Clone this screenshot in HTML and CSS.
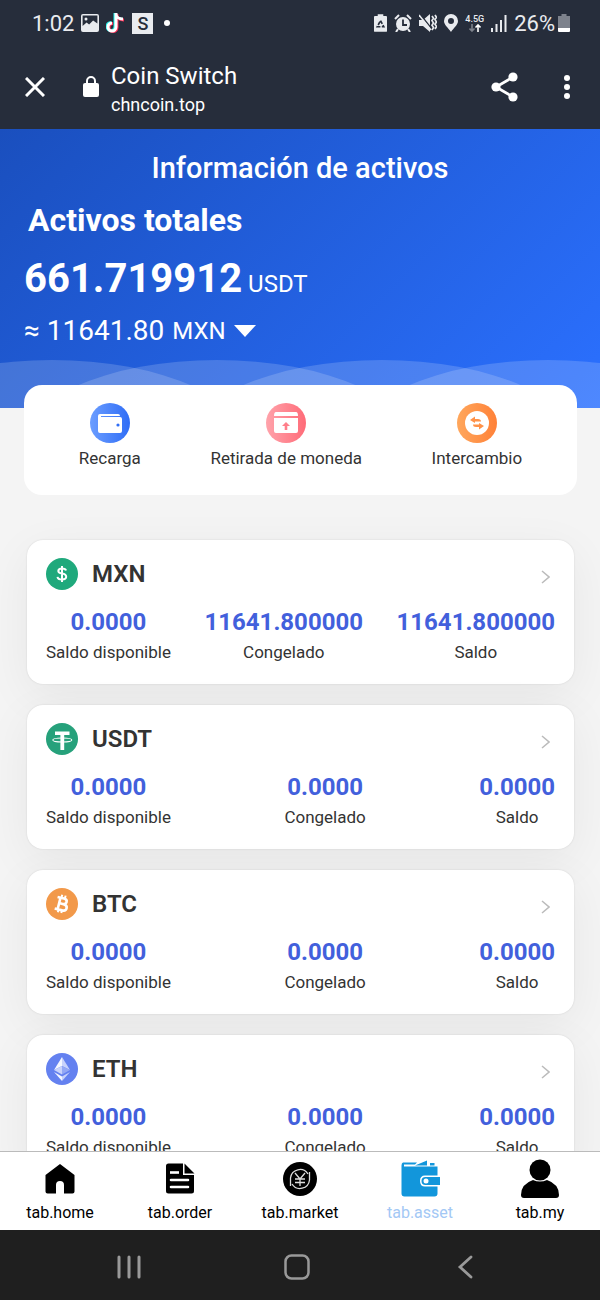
FILE: index.html
```html
<!DOCTYPE html>
<html lang="es">
	<head>
		<meta charset="utf-8">
		<title>Coin Switch</title>
		<meta name="theme-color" content="#262d3b">
		<meta name="viewport" content="width=device-width, initial-scale=1">
		<link rel="stylesheet" href="styles.css">
	</head>
	<body>
		<header class="browser">
			<div class="status">
				<span class="clock">1:02</span>
				<svg width="18" height="18" viewBox="0 0 18 18"><path fill="#e9ebef" fill-rule="evenodd" d="M2 0h14a2 2 0 0 1 2 2v14a2 2 0 0 1-2 2H2a2 2 0 0 1-2-2V2a2 2 0 0 1 2-2zM1.600 1.600V12l4-3.500 2.500 2 4-4 4.300 3V1.600z"/><circle cx="5" cy="5" r="1.500" fill="#e9ebef"/></svg>
				<svg class="tiktok" width="19" height="20" viewBox="0 0 19 20" fill="none" stroke-width="3"><path stroke="#25f4ee" d="M9 0v13.500a4 4 0 1 1-4-4M9 1c0 3 3 5 6 5"/><path stroke="#fe2c55" d="M11 1v13.500a4 4 0 1 1-4-4M11 2c0 3 3 5 7 5"/><path stroke="#fff" d="M10 0v14a4 4 0 1 1-4-4M10 1c0 3 3 5 7 5"/></svg>
				<span class="badge">S</span>
				<span class="dot"></span>
				<div class="system">
					<svg width="13" height="18" viewBox="0 0 14 19"><path fill="#e9ebef" d="M4 0h6v2h3q1 0 1 1v15q0 1-1 1H1q-1 0-1-1V3q0-1 1-1h3z"/><path fill="none" stroke="#262d3b" stroke-width="1.800" stroke-dasharray="4 1.500" d="M7 7l3.500 6.500h-7z"/></svg>
					<svg width="18" height="18" viewBox="0 0 18 18"><circle cx="9" cy="10" r="7" fill="#e9ebef"/><path fill="none" stroke="#e9ebef" stroke-width="2" d="M1 5l4-4M17 5l-4-4M4 15l-2 3M14 15l2 3"/><path fill="none" stroke="#262d3b" stroke-width="1.800" d="M9 5.500V11h4"/></svg>
					<svg width="18" height="18" viewBox="0 0 18 18"><path fill="#e9ebef" d="M0 6h4l7-6v18l-7-6H0z"/><path stroke="#262d3b" stroke-width="1.500" d="M1 0l11 14"/><path stroke="#e9ebef" stroke-width="1.500" d="M0 1l12 15"/><path fill="none" stroke="#e9ebef" stroke-width="1.700" d="M13 2l1.500 2.300L13 6.600 14.500 9 13 11.300l1.500 2.300L13 16M16 1l1.500 2.300L16 5.600 17.500 8 16 10.300l1.500 2.300L16 15"/></svg>
					<svg width="14" height="18" viewBox="0 0 14 18"><path fill="#e9ebef" fill-rule="evenodd" d="M7 0a7 7 0 0 1 7 7c0 4-4.500 7-7 11-2.500-4-7-7-7-11a7 7 0 0 1 7-7zm0 4a3 3 0 1 0 0 6 3 3 0 0 0 0-6z"/></svg>
					<span class="network">
						4.5G
						<svg width="12" height="8" viewBox="0 0 12 8" fill="none" stroke-width="1.600"><path stroke="#7d828c" d="M3 0v7M.500 4.500L3 7l2.500-2.500"/><path stroke="#fff" d="M9 8V1M6.500 3.500L9 1l2.500 2.500"/></svg>
					</span>
					<svg width="16" height="17" viewBox="0 0 16 17" fill="#e9ebef"><path d="M0 13h2v4H0zM4.500 9h2v8h-2zM9 5h2v12H9zM13.500 0h2v17h-2z"/></svg>
					<span class="clock">26%</span>
					<svg class="battery" width="12" height="18" viewBox="0 0 12 18"><path fill="#7d828c" d="M3.500 0h5v2H12v12H0V2h3.500z"/><path fill="#fff" d="M0 14h12v3q0 1-1 1H1q-1 0-1-1z"/></svg>
				</div>
			</div>
			<div class="toolbar">
				<button class="tool" aria-label="Cerrar"><svg width="20" height="20" viewBox="0 0 20 20"><path fill="none" stroke="#fff" stroke-width="3" d="M1 1l18 18M19 1L1 19"/></svg></button>
				<svg class="lock" width="16" height="22" viewBox="0 0 16 22"><rect y="7" width="16" height="14" rx="2" fill="#fff"/><path fill="none" stroke="#fff" stroke-width="2" d="M4 9V5a4 4 0 0 1 8 0v4"/></svg>
				<div class="site">
					<div class="site-name">Coin Switch</div>
					<div class="site-url">chncoin.top</div>
				</div>
				<button class="tool share" aria-label="Compartir"><svg width="28" height="30" viewBox="0 0 28 30" fill="#fff"><path fill="none" stroke="#fff" stroke-width="2.800" d="M22 5L5 15l17 10"/><circle cx="22" cy="5" r="4.600"/><circle cx="5" cy="15" r="4.600"/><circle cx="22" cy="25" r="4.600"/></svg></button>
				<button class="tool" aria-label="Menú"><svg width="6" height="24" viewBox="0 0 6 24" fill="#fff"><circle cx="3" cy="3" r="3"/><circle cx="3" cy="12" r="3"/><circle cx="3" cy="21" r="3"/></svg></button>
			</div>
		</header>

		<main class="page">
			<section class="hero">
				<svg class="waves" viewBox="0 0 600 48" preserveAspectRatio="none" fill="#fff" fill-opacity=".17"><ellipse cx="52" cy="90" rx="200" ry="90"/><ellipse cx="217" cy="90" rx="200" ry="90"/><ellipse cx="382" cy="90" rx="200" ry="90"/><ellipse cx="548" cy="90" rx="200" ry="90"/></svg>
				<h1 class="title">Información de activos</h1>
				<h2 class="subtitle">Activos totales</h2>
				<div class="total"><strong>661.719912</strong> USDT</div>
				<div class="fiat">
					<span>≈ 11641.80</span>
					<select class="currency" aria-label="Moneda"><option>MXN</option></select>
					<svg class="caret" width="22" height="12" viewBox="0 0 22 12"><path fill="#fff" d="M0 0h22L11 12z"/></svg>
				</div>
			</section>

			<section class="actions">
				<button class="action">
					<svg width="40" height="40" viewBox="0 0 40 40"><defs><linearGradient id="blue"><stop stop-color="#6b9dff"/><stop offset="1" stop-color="#2f6df6"/></linearGradient></defs><circle cx="20" cy="20" r="20" fill="url(#blue)"/><path fill="#fff" d="M10 11h18q2 0 2 2H11v1h19q2 0 2 2v12q0 2-2 2H10q-2 0-2-2V13q0-2 2-2z"/><circle cx="28" cy="22" r="1.600" fill="#2f6df6"/></svg>
					Recarga
				</button>
				<button class="action">
					<svg width="40" height="40" viewBox="0 0 40 40"><defs><linearGradient id="pink"><stop stop-color="#ffa3ab"/><stop offset="1" stop-color="#ff6b78"/></linearGradient></defs><circle cx="20" cy="20" r="20" fill="url(#pink)"/><path fill="#fff" d="M10 9h20q2 0 2 4H8q0-4 2-4zM8 15h24v13q0 2-2 2H10q-2 0-2-2z"/><path fill="#ff7f8a" d="M20 19l4 4h-2.700v4h-2.600v-4H16z"/></svg>
					Retirada de moneda
				</button>
				<button class="action">
					<svg width="40" height="40" viewBox="0 0 40 40"><defs><linearGradient id="orange"><stop stop-color="#ffa75c"/><stop offset="1" stop-color="#ff8138"/></linearGradient></defs><circle cx="20" cy="20" r="20" fill="url(#orange)"/><circle cx="20" cy="20" r="12" fill="#fff"/><path fill="#ff9249" d="M13 17l5-3.500V16h3q3 0 3 2.500h-6V20zM27 23l-5 3.500V24h-3q-3 0-3-2.500h6V20z"/></svg>
					Intercambio
				</button>
			</section>

			<section class="coins">
				<article class="coin">
					<div class="coin-head">
						<svg width="32" height="32" viewBox="0 0 32 32"><circle cx="16" cy="16" r="16" fill="#1fa97c"/><path fill="none" stroke="#fff" stroke-width="2" d="M20 12.500q-.500-2-4-2-3.700 0-3.700 2.500 0 2 3.700 2.600 4.200.600 4.200 3.200 0 2.700-4.200 2.700t-4.500-2.700M16 8v16"/></svg>
						<h3>MXN</h3>
						<a href="#mxn" class="more" aria-label="Ver MXN"><svg width="9" height="14" viewBox="0 0 9 14"><path fill="none" stroke="#bbb" stroke-width="1.500" d="M1 1l7 6-7 6"/></svg></a>
					</div>
					<dl class="balances">
						<div><dd>0.0000</dd><dt>Saldo disponible</dt></div>
						<div><dd>11641.800000</dd><dt>Congelado</dt></div>
						<div><dd>11641.800000</dd><dt>Saldo</dt></div>
					</dl>
				</article>
				<article class="coin">
					<div class="coin-head">
						<svg width="32" height="32" viewBox="0 0 32 32"><circle cx="16" cy="16" r="16" fill="#26a17b"/><path fill="#fff" d="M9 8.500h14.500v3.500h-5.300V27h-3.800V12H9z"/><ellipse cx="16.300" cy="17" rx="9.500" ry="2" fill="none" stroke="#fff" stroke-width="1.100"/></svg>
						<h3>USDT</h3>
						<a href="#usdt" class="more" aria-label="Ver USDT"><svg width="9" height="14" viewBox="0 0 9 14"><path fill="none" stroke="#bbb" stroke-width="1.500" d="M1 1l7 6-7 6"/></svg></a>
					</div>
					<dl class="balances">
						<div><dd>0.0000</dd><dt>Saldo disponible</dt></div>
						<div><dd>0.0000</dd><dt>Congelado</dt></div>
						<div><dd>0.0000</dd><dt>Saldo</dt></div>
					</dl>
				</article>
				<article class="coin">
					<div class="coin-head">
						<svg width="32" height="32" viewBox="0 0 32 32"><circle cx="16" cy="16" r="16" fill="#f2994a"/><g transform="rotate(14 16 16)" fill="none" stroke="#fff"><path stroke-width="2.600" d="M10 10.200h6.500q3.500 0 3.500 2.800t-3.500 2.800H13h4.500q4 0 4 3.200t-4 3.200H10M13 10v12"/><path stroke-width="2" d="M14 7v3M17.500 7v3M14 22v3M17.500 22v3"/></g></svg>
						<h3>BTC</h3>
						<a href="#btc" class="more" aria-label="Ver BTC"><svg width="9" height="14" viewBox="0 0 9 14"><path fill="none" stroke="#bbb" stroke-width="1.500" d="M1 1l7 6-7 6"/></svg></a>
					</div>
					<dl class="balances">
						<div><dd>0.0000</dd><dt>Saldo disponible</dt></div>
						<div><dd>0.0000</dd><dt>Congelado</dt></div>
						<div><dd>0.0000</dd><dt>Saldo</dt></div>
					</dl>
				</article>
				<article class="coin">
					<div class="coin-head">
						<svg width="32" height="32" viewBox="0 0 32 32"><circle cx="16" cy="16" r="16" fill="#6481f0"/><path fill="#f4f6ff" d="M16 4v9l-8 4z"/><path fill="#c8d2fb" d="M16 4l8 13-8-4z"/><path fill="#c8d2fb" d="M16 13v8.500L8 17z"/><path fill="#94a8f5" d="M16 13l8 4-8 4.500z"/><path fill="#f4f6ff" d="M8 19l8 4.500V28z"/><path fill="#c8d2fb" d="M24 19l-8 4.500V28z"/></svg>
						<h3>ETH</h3>
						<a href="#eth" class="more" aria-label="Ver ETH"><svg width="9" height="14" viewBox="0 0 9 14"><path fill="none" stroke="#bbb" stroke-width="1.500" d="M1 1l7 6-7 6"/></svg></a>
					</div>
					<dl class="balances">
						<div><dd>0.0000</dd><dt>Saldo disponible</dt></div>
						<div><dd>0.0000</dd><dt>Congelado</dt></div>
						<div><dd>0.0000</dd><dt>Saldo</dt></div>
					</dl>
				</article>
			</section>
		</main>

		<nav class="tabs">
			<a href="#home" class="tab">
				<svg width="40" height="40" viewBox="0 0 40 40"><path d="M20 5l14.500 11v16.500q0 2-2 2H24V26q0-4-4-4t-4 4v8.500H7.500q-2 0-2-2V16z"/></svg>
				tab.home
			</a>
			<a href="#order" class="tab">
				<svg width="40" height="40" viewBox="0 0 40 40"><path d="M8.500 4.500H23V16h11v16q0 2.500-2.500 2.500h-23Q6 34.500 6 32V7q0-2.500 2.500-2.500zM24.500 4.500l10 10h-10z"/><path fill="none" stroke="#fff" stroke-width="2.600" stroke-linecap="round" d="M11 21h17M11 28h17"/><path stroke="#fff" stroke-width="2.600" d="M10 13.500h9"/></svg>
				tab.order
			</a>
			<a href="#market" class="tab">
				<svg width="40" height="40" viewBox="0 0 40 40"><circle cx="20" cy="20" r="17"/><g fill="none" stroke="#ddd" stroke-width="1.300"><path d="M28 15a9.500 9.500 0 0 0-17.500 4v8M12 25a9.500 9.500 0 0 0 17.500-4v-8M15 14l5 6 5-6M15 20h10M15 23.500h10M20 20v7"/></g></svg>
				tab.market
			</a>
			<a href="#asset" class="tab active">
				<svg width="40" height="40" viewBox="0 0 40 40"><path fill="#1296db" d="M3 3.500h14l-2 2H4v2h33.500v9H25q-5 0-5 5.500t5 5.500h12.500v7q0 3-3 3H4.500q-3 0-3-3v-28q0-2.500 1.500-3zM15 6.500L27 1.500v5zM30 4h4.500v2.500H30zM25.500 18H40v8H25.500q-4 0-4-4t4-4z"/><circle cx="26" cy="22" r="2.500" fill="#fff"/></svg>
				tab.asset
			</a>
			<a href="#my" class="tab">
				<svg width="40" height="40" viewBox="0 0 40 40"><circle cx="20" cy="11" r="10.500"/><path d="M13 21q7 3 14 0 12 4 12 15 0 3-3 3H4q-3 0-3-3 0-11 12-15z"/></svg>
				tab.my
			</a>
		</nav>

		<footer class="keys">
			<button class="key" aria-label="Recientes"><svg width="24" height="24" viewBox="0 0 24 24"><path stroke="#999" stroke-width="3" stroke-linecap="round" d="M2 2v20M12 2v20M22 2v20"/></svg></button>
			<button class="key" aria-label="Inicio"><svg width="26" height="26" viewBox="0 0 26 26"><rect x="1.500" y="1.500" width="23" height="23" rx="6" fill="none" stroke="#999" stroke-width="2.500"/></svg></button>
			<button class="key" aria-label="Atrás"><svg width="16" height="24" viewBox="0 0 16 24"><path fill="none" stroke="#999" stroke-width="2.800" stroke-linecap="round" d="M14 2L3 12l11 10"/></svg></button>
		</footer>
	</body>
</html>
```
FILE: styles.css
```css
* {
	box-sizing: border-box;
}
html, body {
	margin: 0;
	padding: 0;
	height: 100%;
}
body {
	display: flex;
	flex-direction: column;
	background: #f4f4f4;
	color: #333;
	font-family: Roboto, sans-serif;
	font-size: 17px;
}
h1, h2, h3, dl, dd {
	margin: 0;
}
button, select {
	border: none;
	padding: 0;
	background: none;
	color: inherit;
	font: inherit;
}
button {
	cursor: pointer;
}
svg {
	display: block;
	flex: none;
}

/* phone status bar and browser toolbar */
.browser {
	flex: none;
	background: #262d3b;
	color: #fff;
}
.status {
	display: flex;
	align-items: center;
	gap: 7px;
	height: 46px;
	padding: 0 30px 0 32px;
	color: #e9ebef;
}
.clock {
	font-size: 22px;
}
.badge {
	width: 21px;
	background: #e9ebef;
	color: #262d3b;
	font-size: 18px;
	font-weight: 500;
	line-height: 21px;
	text-align: center;
}
.dot {
	width: 6px;
	height: 6px;
	margin-left: 4px;
	border-radius: 50%;
	background: #fff;
}
.system {
	display: flex;
	align-items: center;
	gap: 7px;
	margin-left: auto;
}
.network {
	display: flex;
	flex-direction: column;
	align-items: center;
	font-size: 9px;
	font-weight: 500;
	line-height: 10px;
}
.battery {
	margin-left: -4px;
}
.toolbar {
	display: flex;
	align-items: center;
	height: 83px;
	padding: 0 30px 2px 25px;
}
.lock {
	margin-left: 38px;
}
.site {
	margin-left: 12px;
	padding-top: 6px;
}
.site-name {
	font-size: 24px;
	line-height: 30px;
}
.site-url {
	font-size: 18px;
	line-height: 28px;
}
.share {
	margin-left: auto;
	margin-right: 45px;
}

.page {
	flex: 1;
	min-height: 0;
	overflow: hidden;
}
.hero {
	position: relative;
	padding: 17px 24px 52px;
	background: linear-gradient(135deg, #1a4fbe, #2b70ff);
	color: #fff;
}
.waves {
	position: absolute;
	left: 0;
	bottom: 0;
	width: 100%;
	height: 48px;
}
.title {
	font-size: 29px;
	font-weight: 500;
	line-height: 44px;
	text-align: center;
}
.subtitle {
	padding-left: 4px;
	font-size: 32px;
	font-weight: 700;
	line-height: 60px;
}
.total {
	padding-top: 12px;
	font-size: 24px;
	line-height: 44px;
}
.total strong {
	font-size: 40px;
	line-height: 32px;
}
.fiat {
	display: flex;
	align-items: center;
	gap: 8px;
	font-size: 28px;
	line-height: 50px;
}
.currency {
	appearance: none;
	font-size: 24px;
}

.actions {
	position: relative;
	display: flex;
	justify-content: space-around;
	align-items: flex-start;
	margin: -23px 23px 0 24px;
	padding: 18px 20px 22px;
	border-radius: 18px;
	background: #fff;
}
.action {
	display: flex;
	flex-direction: column;
	align-items: center;
	line-height: 30px;
}

.coins {
	display: grid;
	gap: 21px;
	padding: 45px 26px 21px 27px;
}
.coin {
	padding: 18px 19px 17px;
	border-radius: 16px;
	background: #fff;
	box-shadow: 0 0 2px rgba(0, 0, 0, .12), 0 12px 48px rgba(0, 0, 0, .06);
}
.coin-head {
	display: flex;
	align-items: center;
	height: 32px;
	margin-bottom: 17px;
}
.coin-head h3 {
	margin-left: 14px;
	font-size: 24px;
	font-weight: 600;
}
.more {
	margin-left: auto;
	padding: 6px 5px 0;
}
.balances {
	display: flex;
	justify-content: space-between;
	line-height: 30px;
	text-align: center;
}
.balances div {
	display: flex;
	flex-direction: column;
}
.balances dd {
	color: #4260dc;
	font-size: 24px;
	font-weight: 700;
}

.tabs {
	display: flex;
	flex: none;
	border-top: 1px solid #bbb;
	background: #fff;
}
.tab {
	display: flex;
	flex: 1;
	flex-direction: column;
	align-items: center;
	padding: 7px 0 4px;
	color: #000;
	font-size: 16px;
	line-height: 27px;
	text-decoration: none;
}
.tab.active {
	color: #a3c8f5;
}

/* android navigation keys */
.keys {
	display: flex;
	flex: none;
	height: 70px;
	padding: 4px 51px 0 45px;
	background: #1f1f1f;
}
.key {
	display: flex;
	flex: 1;
	align-items: center;
	justify-content: center;
}
```
